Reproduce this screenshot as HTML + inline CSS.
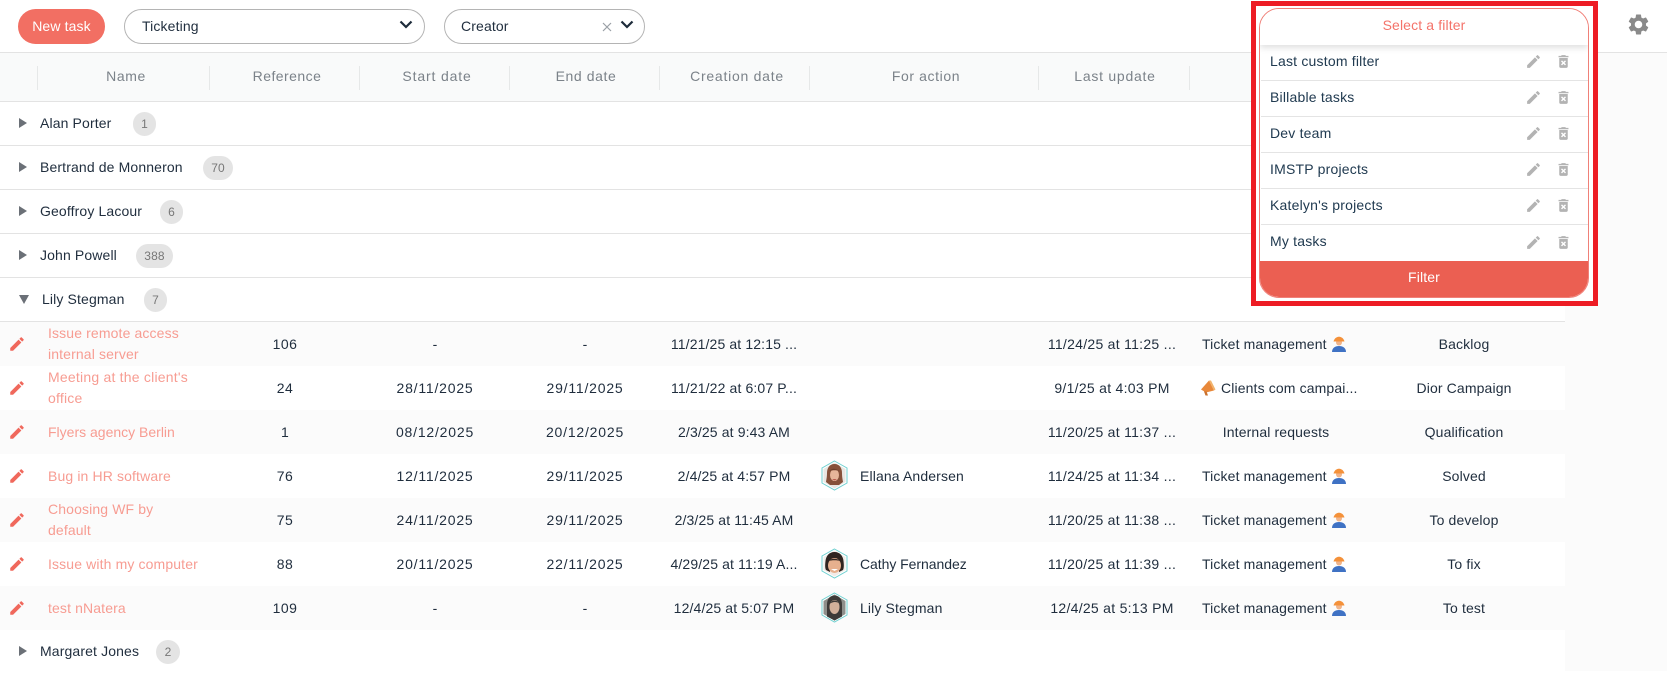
<!DOCTYPE html>
<html><head><meta charset="utf-8"><title>Tasks</title>
<style>
*{box-sizing:border-box}
html,body{margin:0;padding:0}
body{width:1667px;height:671px;overflow:hidden;background:#fff;position:relative;font-family:"Liberation Sans",sans-serif;font-size:14px;color:#1f2d3d;letter-spacing:.13px}
.a{position:absolute;white-space:nowrap}
.pill{position:absolute;top:9px;height:35px;border:1px solid #b4b4b4;border-radius:18px;background:#fff;line-height:33px}
.sep{position:absolute;top:66px;width:1px;height:24px;background:#e6e8e8}
.hd{position:absolute;top:66px;line-height:20px;color:#7b8289;letter-spacing:.6px;transform:translateX(-50%);white-space:nowrap}
.g{position:absolute;left:0;width:1565px;height:44px;background:#fff;border-bottom:1px solid #e3e3e3;line-height:43px}
.g .t{position:absolute;left:19px;top:16px;width:0;height:0;border-left:8px solid #6b7077;border-top:5px solid transparent;border-bottom:5px solid transparent}
.g .n{position:absolute;left:40px;top:0}
.g .b{position:absolute;top:10px;height:24px;border-radius:12px;background:#e4e4e4;color:#777;font-size:12px;line-height:24px;text-align:center}
.r{position:absolute;left:0;width:1565px;height:44px;line-height:44px}
.o{background:#fbfbfb}
.r svg.p{position:absolute;left:8px;top:13px;width:18px;height:18px;fill:#f0685c}
.l{position:absolute;left:48px;color:#f79c92;white-space:nowrap}
.l2{top:1px;line-height:21px}
.m{position:absolute;white-space:nowrap;transform:translateX(-50%)}
.d{letter-spacing:.8px}
.u{letter-spacing:.28px}
.em{position:absolute;top:14px;width:16px;height:16px}
.fr{position:absolute;left:1px;width:328px;border-bottom:1px solid #e4e4e4;color:#203a50;letter-spacing:.2px}
.fr span{position:absolute;left:9px;top:6px;line-height:20px;white-space:nowrap}
.fr svg{position:absolute;width:17px;height:17px;fill:#b3b3b3;top:8px}
.fr svg.e{left:264px}
.fr svg.x{left:294px}
</style></head><body>

<div class="a" style="left:1565px;top:53px;width:102px;height:618px;background:#fbfbfb"></div>

<!-- top bar -->
<div class="a" style="left:18px;top:9px;width:87px;height:35px;border-radius:18px;background:#f26f63;color:#fff;text-align:center;line-height:34px">New task</div>
<div class="pill" style="left:124px;width:301px"><span class="a" style="left:17px">Ticketing</span>
<svg class="a" style="left:274px;top:10px" width="14" height="10" viewBox="0 0 14 10"><path d="M1.500 1.500 7 7l5.500-5.500" fill="none" stroke="#1d2b3a" stroke-width="2.200"/></svg></div>
<div class="pill" style="left:444px;width:201px"><span class="a" style="left:16px">Creator</span>
<svg class="a" style="left:157px;top:12px" width="10" height="10" viewBox="0 0 10 10"><path d="M1 1l8 8M9 1l-8 8" stroke="#9aa0a6" stroke-width="1.200"/></svg>
<svg class="a" style="left:175px;top:10px" width="14" height="10" viewBox="0 0 14 10"><path d="M1.500 1.500 7 7l5.500-5.500" fill="none" stroke="#1d2b3a" stroke-width="2.200"/></svg></div>

<svg class="a" style="left:1626px;top:12px" width="25" height="25" viewBox="0 0 24 24" fill="#8a8a8a"><path d="M19.14 12.94c.04-.3.06-.61.06-.94 0-.32-.02-.64-.07-.94l2.03-1.58c.18-.14.23-.41.12-.61l-1.92-3.32c-.12-.22-.37-.29-.59-.22l-2.39.96c-.5-.38-1.03-.7-1.62-.94l-.36-2.54c-.04-.24-.24-.41-.48-.41h-3.84c-.24 0-.43.17-.47.41l-.36 2.54c-.59.24-1.13.57-1.62.94l-2.39-.96c-.22-.08-.47 0-.59.22L2.74 8.87c-.12.21-.08.47.12.61l2.03 1.58c-.05.3-.09.63-.09.94s.02.64.07.94l-2.03 1.58c-.18.14-.23.41-.12.61l1.92 3.32c.12.22.37.29.59.22l2.39-.96c.5.38 1.03.7 1.62.94l.36 2.54c.05.24.24.41.48.41h3.84c.24 0 .44-.17.47-.41l.36-2.54c.59-.24 1.13-.56 1.62-.94l2.39.96c.22.08.47 0 .59-.22l1.92-3.32c.12-.22.07-.47-.12-.61l-2.01-1.58zM12 15.6c-1.98 0-3.6-1.62-3.6-3.6s1.62-3.6 3.6-3.6 3.6 1.62 3.6 3.6-1.62 3.6-3.6 3.6z"/></svg>

<!-- table header -->
<div class="a" style="left:0;top:52px;width:1667px;height:1px;background:#e3e3e3"></div>
<div class="a" style="left:0;top:53px;width:1565px;height:49px;background:#f9fafa;border-bottom:1px solid #e3e3e3"></div>
<div class="sep" style="left:37px"></div><div class="sep" style="left:209px"></div><div class="sep" style="left:359px"></div><div class="sep" style="left:509px"></div><div class="sep" style="left:659px"></div><div class="sep" style="left:809px"></div><div class="sep" style="left:1038px"></div><div class="sep" style="left:1189px"></div>
<div class="hd" style="left:126px">Name</div>
<div class="hd" style="left:287px;letter-spacing:.45px">Reference</div>
<div class="hd" style="left:437px;letter-spacing:.85px">Start date</div>
<div class="hd" style="left:586px">End date</div>
<div class="hd" style="left:737px;letter-spacing:.75px">Creation date</div>
<div class="hd" style="left:926px">For action</div>
<div class="hd" style="left:1115px;letter-spacing:.75px">Last update</div>

<!-- groups -->
<div class="g" style="top:102px"><i class="t"></i><span class="n">Alan Porter</span><span class="b" style="left:133px;width:23px">1</span></div>
<div class="g" style="top:146px"><i class="t"></i><span class="n">Bertrand de Monneron</span><span class="b" style="left:203px;width:30px">70</span></div>
<div class="g" style="top:190px"><i class="t"></i><span class="n">Geoffroy Lacour</span><span class="b" style="left:160px;width:23px">6</span></div>
<div class="g" style="top:234px"><i class="t"></i><span class="n">John Powell</span><span class="b" style="left:136px;width:37px">388</span></div>
<div class="g" style="top:278px"><i class="t" style="top:17px;border-top:9px solid #6b7077;border-left:5px solid transparent;border-right:5px solid transparent;border-bottom:0"></i><span class="n" style="left:42px">Lily Stegman</span><span class="b" style="left:144px;width:23px">7</span></div>

<!-- rows -->
<div class="r o" style="top:322px">
<svg class="p" viewBox="0 0 24 24"><path d="M3 17.25V21h3.75L17.81 9.94l-3.75-3.75L3 17.25zM20.71 7.04c.39-.39.39-1.02 0-1.41l-2.34-2.34c-.39-.39-1.02-.39-1.41 0l-1.83 1.83 3.75 3.75 1.83-1.83z"/></svg>
<div class="l l2">Issue remote access<br>internal server</div>
<span class="m" style="left:285px;letter-spacing:.5px">106</span><span class="m" style="left:435px">-</span><span class="m" style="left:585px">-</span><span class="m" style="left:734px">11/21/25 at 12:15 ...</span><span class="m u" style="left:1112px">11/24/25 at 11:25 ...</span>
<span class="a" style="left:1202px">Ticket management</span>
<svg class="em" style="left:1331px" viewBox="0 0 16 16"><path d="M1 16c0-4 3-6 7-6s7 2 7 6z" fill="#3f72c4"/><circle cx="8" cy="6.500" r="3" fill="#f0b48a"/><path d="M2.500 5.500C3.500 2 6 .8 8 .8s4.500 1.200 5.500 4.700z" fill="#f4913a"/></svg>
<span class="m" style="left:1464px">Backlog</span></div>

<div class="r" style="top:366px">
<svg class="p" viewBox="0 0 24 24"><path d="M3 17.25V21h3.75L17.81 9.94l-3.75-3.75L3 17.25zM20.71 7.04c.39-.39.39-1.02 0-1.41l-2.34-2.34c-.39-.39-1.02-.39-1.41 0l-1.83 1.83 3.75 3.75 1.83-1.83z"/></svg>
<div class="l l2" style="letter-spacing:.22px">Meeting at the client's<br>office</div>
<span class="m" style="left:285px;letter-spacing:.5px">24</span><span class="m d" style="left:435px">28/11/2025</span><span class="m d" style="left:585px">29/11/2025</span><span class="m" style="left:734px">11/21/22 at 6:07 P...</span><span class="m u" style="left:1112px">9/1/25 at 4:03 PM</span>
<svg class="em" style="left:1200px;top:13px;height:17px" viewBox="0 0 16 16"><path d="M1 10 9 1l5 10-8 2z" fill="#e8883a"/><path d="M4 12l1.500 4h2.500l-1.500-4z" fill="#c9702c"/><path d="M9 1l5 10 1.500-1L11 1z" fill="#f2b36b"/></svg>
<span class="a" style="left:1221px">Clients com campai...</span>
<span class="m" style="left:1464px">Dior Campaign</span></div>

<div class="r o" style="top:410px">
<svg class="p" viewBox="0 0 24 24"><path d="M3 17.25V21h3.75L17.81 9.94l-3.75-3.75L3 17.25zM20.71 7.04c.39-.39.39-1.02 0-1.41l-2.34-2.34c-.39-.39-1.02-.39-1.41 0l-1.83 1.83 3.75 3.75 1.83-1.83z"/></svg>
<div class="l" style="letter-spacing:0">Flyers agency Berlin</div>
<span class="m" style="left:285px">1</span><span class="m d" style="left:435px">08/12/2025</span><span class="m d" style="left:585px">20/12/2025</span><span class="m" style="left:734px">2/3/25 at 9:43 AM</span><span class="m u" style="left:1112px">11/20/25 at 11:37 ...</span>
<span class="m" style="left:1276px">Internal requests</span>
<span class="m" style="left:1464px">Qualification</span></div>

<div class="r" style="top:454px">
<svg class="p" viewBox="0 0 24 24"><path d="M3 17.25V21h3.75L17.81 9.94l-3.75-3.75L3 17.25zM20.71 7.04c.39-.39.39-1.02 0-1.41l-2.34-2.34c-.39-.39-1.02-.39-1.41 0l-1.83 1.83 3.75 3.75 1.83-1.83z"/></svg>
<div class="l">Bug in HR software</div>
<span class="m" style="left:285px;letter-spacing:.5px">76</span><span class="m d" style="left:435px">12/11/2025</span><span class="m d" style="left:585px">29/11/2025</span><span class="m" style="left:734px">2/4/25 at 4:57 PM</span>
<svg class="a" style="left:821px;top:6px" width="27" height="31" viewBox="0 0 27 31"><polygon points="13.500,1 26,8 26,23 13.500,30 1,23 1,8" fill="#fff" stroke="#6fd0d0"/><polygon points="13.500,2.500 24.500,9 24.500,22 13.500,28.500 2.500,22 2.500,9" fill="#e9e6e2"/><path d="M13.500 4c-5 0-7.500 4-7.500 9 0 5-1 8-1 9l4 3h9l4-3c0-1-1-4-1-9 0-5-2.500-9-7.500-9z" fill="#86513a"/><ellipse cx="13.500" cy="15" rx="4.500" ry="6" fill="#e6b59a"/><path d="M8.500 11c2-3 6-3 10 0-3-1-7-1-10 0z" fill="#6e3f2c"/><path d="M11 19h5l-2.500 1.500z" fill="#b8584d"/></svg>
<span class="a" style="left:860px">Ellana Andersen</span>
<span class="m u" style="left:1112px">11/24/25 at 11:34 ...</span>
<span class="a" style="left:1202px">Ticket management</span>
<svg class="em" style="left:1331px" viewBox="0 0 16 16"><path d="M1 16c0-4 3-6 7-6s7 2 7 6z" fill="#3f72c4"/><circle cx="8" cy="6.500" r="3" fill="#f0b48a"/><path d="M2.500 5.500C3.500 2 6 .8 8 .8s4.500 1.200 5.500 4.700z" fill="#f4913a"/></svg>
<span class="m" style="left:1464px">Solved</span></div>

<div class="r o" style="top:498px">
<svg class="p" viewBox="0 0 24 24"><path d="M3 17.25V21h3.75L17.81 9.94l-3.75-3.75L3 17.25zM20.71 7.04c.39-.39.39-1.02 0-1.41l-2.34-2.34c-.39-.39-1.02-.39-1.41 0l-1.83 1.83 3.75 3.75 1.83-1.83z"/></svg>
<div class="l l2">Choosing WF by<br>default</div>
<span class="m" style="left:285px;letter-spacing:.5px">75</span><span class="m d" style="left:435px">24/11/2025</span><span class="m d" style="left:585px">29/11/2025</span><span class="m" style="left:734px">2/3/25 at 11:45 AM</span><span class="m u" style="left:1112px">11/20/25 at 11:38 ...</span>
<span class="a" style="left:1202px">Ticket management</span>
<svg class="em" style="left:1331px" viewBox="0 0 16 16"><path d="M1 16c0-4 3-6 7-6s7 2 7 6z" fill="#3f72c4"/><circle cx="8" cy="6.500" r="3" fill="#f0b48a"/><path d="M2.500 5.500C3.500 2 6 .8 8 .8s4.500 1.200 5.500 4.700z" fill="#f4913a"/></svg>
<span class="m" style="left:1464px">To develop</span></div>

<div class="r" style="top:542px">
<svg class="p" viewBox="0 0 24 24"><path d="M3 17.25V21h3.75L17.81 9.94l-3.75-3.75L3 17.25zM20.71 7.04c.39-.39.39-1.02 0-1.41l-2.34-2.34c-.39-.39-1.02-.39-1.41 0l-1.83 1.83 3.75 3.75 1.83-1.83z"/></svg>
<div class="l">Issue with my computer</div>
<span class="m" style="left:285px;letter-spacing:.5px">88</span><span class="m d" style="left:435px">20/11/2025</span><span class="m d" style="left:585px">22/11/2025</span><span class="m" style="left:734px">4/29/25 at 11:19 A...</span>
<svg class="a" style="left:821px;top:6px" width="27" height="31" viewBox="0 0 27 31"><polygon points="13.500,1 26,8 26,23 13.500,30 1,23 1,8" fill="#fff" stroke="#6fd0d0"/><polygon points="13.500,2.500 24.500,9 24.500,22 13.500,28.500 2.500,22 2.500,9" fill="#f1ece8"/><path d="M13.500 4C8 4 5 8 4.500 13 4 17 4 20 5 22l4 2V14c3 0 7 0 9 0v10l4-2c1-2 1-5 .5-9C22 8 19 4 13.500 4z" fill="#2f2420"/><ellipse cx="13.500" cy="17.500" rx="6.500" ry="7.500" fill="#e6b08e"/><path d="M7 13c3-3 9-3 13 0-4-1-9-1-13 0z" fill="#2f2420"/><path d="M10 21h7l-3.500 2z" fill="#fff"/></svg>
<span class="a" style="left:860px;letter-spacing:-.05px">Cathy Fernandez</span>
<span class="m u" style="left:1112px">11/20/25 at 11:39 ...</span>
<span class="a" style="left:1202px">Ticket management</span>
<svg class="em" style="left:1331px" viewBox="0 0 16 16"><path d="M1 16c0-4 3-6 7-6s7 2 7 6z" fill="#3f72c4"/><circle cx="8" cy="6.500" r="3" fill="#f0b48a"/><path d="M2.500 5.500C3.500 2 6 .8 8 .8s4.500 1.200 5.500 4.700z" fill="#f4913a"/></svg>
<span class="m" style="left:1464px">To fix</span></div>

<div class="r o" style="top:586px">
<svg class="p" viewBox="0 0 24 24"><path d="M3 17.25V21h3.75L17.81 9.94l-3.75-3.75L3 17.25zM20.71 7.04c.39-.39.39-1.02 0-1.41l-2.34-2.34c-.39-.39-1.02-.39-1.41 0l-1.83 1.83 3.75 3.75 1.83-1.83z"/></svg>
<div class="l">test nNatera</div>
<span class="m" style="left:285px;letter-spacing:.5px">109</span><span class="m" style="left:435px">-</span><span class="m" style="left:585px">-</span><span class="m" style="left:734px">12/4/25 at 5:07 PM</span>
<svg class="a" style="left:821px;top:6px" width="27" height="31" viewBox="0 0 27 31"><polygon points="13.500,1 26,8 26,23 13.500,30 1,23 1,8" fill="#fff" stroke="#6fd0d0"/><polygon points="13.500,2.500 24.500,9 24.500,22 13.500,28.500 2.500,22 2.500,9" fill="#8f8f8b"/><path d="M13.500 3.500c-5 0-7.500 4-7.500 9v12l7.500 4 7.500-4v-12c0-5-2.500-9-7.500-9z" fill="#3d3a38"/><ellipse cx="13.500" cy="15" rx="5" ry="7" fill="#d2b09a"/><path d="M8.500 12c2-4 6-5 10-1-3-1-6-2-10 1z" fill="#3d3a38"/></svg>
<span class="a" style="left:860px">Lily Stegman</span>
<span class="m u" style="left:1112px">12/4/25 at 5:13 PM</span>
<span class="a" style="left:1202px">Ticket management</span>
<svg class="em" style="left:1331px" viewBox="0 0 16 16"><path d="M1 16c0-4 3-6 7-6s7 2 7 6z" fill="#3f72c4"/><circle cx="8" cy="6.500" r="3" fill="#f0b48a"/><path d="M2.500 5.500C3.500 2 6 .8 8 .8s4.500 1.200 5.500 4.700z" fill="#f4913a"/></svg>
<span class="m" style="left:1464px">To test</span></div>

<div class="g" style="top:630px;border-bottom:0"><i class="t"></i><span class="n">Margaret Jones</span><span class="b" style="left:156px;width:24px">2</span></div>

<!-- highlight + filter panel -->
<div class="a" style="left:1251px;top:1px;width:347px;height:305px;border:5px solid #ed1c24;background:#fff"></div>
<div class="a" style="left:1259px;top:8px;width:330px;height:290px;background:#fff;border:1px solid #f08078;border-radius:20px;overflow:hidden">
  <div class="a" style="left:0;top:0;width:328px;height:36px;text-align:center;line-height:32px;color:#f4736a;box-shadow:0 3px 6px rgba(0,0,0,.12);background:#fff;z-index:2">Select a filter</div>
  <div class="fr" style="top:36px;height:36px"><span>Last custom filter</span><svg class="e" viewBox="0 0 24 24"><path d="M3 17.25V21h3.75L17.81 9.94l-3.75-3.75L3 17.25zM20.71 7.04c.39-.39.39-1.02 0-1.41l-2.34-2.34c-.39-.39-1.02-.39-1.41 0l-1.83 1.83 3.75 3.75 1.83-1.83z"/></svg><svg class="x" viewBox="0 0 24 24"><path d="M6 19c0 1.1.9 2 2 2h8c1.1 0 2-.9 2-2V7H6v12zm2.460-7.120l1.410-1.410L12 12.590l2.120-2.120 1.410 1.410L13.410 14l2.120 2.120-1.410 1.410L12 15.410l-2.120 2.120-1.410-1.410L10.590 14l-2.130-2.120zM15.500 4l-1-1h-5l-1 1H5v2h14V4z"/></svg></div>
  <div class="fr" style="top:72px;height:36px"><span>Billable tasks</span><svg class="e" viewBox="0 0 24 24"><path d="M3 17.25V21h3.75L17.81 9.94l-3.75-3.75L3 17.25zM20.71 7.04c.39-.39.39-1.02 0-1.41l-2.34-2.34c-.39-.39-1.02-.39-1.41 0l-1.83 1.83 3.75 3.75 1.83-1.83z"/></svg><svg class="x" viewBox="0 0 24 24"><path d="M6 19c0 1.1.9 2 2 2h8c1.1 0 2-.9 2-2V7H6v12zm2.460-7.120l1.410-1.410L12 12.590l2.120-2.120 1.410 1.410L13.410 14l2.120 2.120-1.410 1.410L12 15.410l-2.120 2.120-1.410-1.410L10.590 14l-2.130-2.120zM15.500 4l-1-1h-5l-1 1H5v2h14V4z"/></svg></div>
  <div class="fr" style="top:108px;height:36px"><span>Dev team</span><svg class="e" viewBox="0 0 24 24"><path d="M3 17.25V21h3.75L17.81 9.94l-3.75-3.75L3 17.25zM20.71 7.04c.39-.39.39-1.02 0-1.41l-2.34-2.34c-.39-.39-1.02-.39-1.41 0l-1.83 1.83 3.75 3.75 1.83-1.83z"/></svg><svg class="x" viewBox="0 0 24 24"><path d="M6 19c0 1.1.9 2 2 2h8c1.1 0 2-.9 2-2V7H6v12zm2.460-7.120l1.410-1.410L12 12.590l2.120-2.120 1.410 1.410L13.410 14l2.120 2.120-1.410 1.410L12 15.410l-2.120 2.120-1.410-1.410L10.590 14l-2.130-2.120zM15.500 4l-1-1h-5l-1 1H5v2h14V4z"/></svg></div>
  <div class="fr" style="top:144px;height:36px"><span>IMSTP projects</span><svg class="e" viewBox="0 0 24 24"><path d="M3 17.25V21h3.75L17.81 9.94l-3.75-3.75L3 17.25zM20.71 7.04c.39-.39.39-1.02 0-1.41l-2.34-2.34c-.39-.39-1.02-.39-1.41 0l-1.83 1.83 3.75 3.75 1.83-1.83z"/></svg><svg class="x" viewBox="0 0 24 24"><path d="M6 19c0 1.1.9 2 2 2h8c1.1 0 2-.9 2-2V7H6v12zm2.460-7.120l1.410-1.410L12 12.590l2.120-2.120 1.410 1.410L13.410 14l2.120 2.120-1.410 1.410L12 15.410l-2.120 2.120-1.410-1.410L10.590 14l-2.130-2.120zM15.500 4l-1-1h-5l-1 1H5v2h14V4z"/></svg></div>
  <div class="fr" style="top:180px;height:36px"><span>Katelyn's projects</span><svg class="e" viewBox="0 0 24 24"><path d="M3 17.25V21h3.75L17.81 9.94l-3.75-3.75L3 17.25zM20.71 7.04c.39-.39.39-1.02 0-1.41l-2.34-2.34c-.39-.39-1.02-.39-1.41 0l-1.83 1.83 3.75 3.75 1.83-1.83z"/></svg><svg class="x" viewBox="0 0 24 24"><path d="M6 19c0 1.1.9 2 2 2h8c1.1 0 2-.9 2-2V7H6v12zm2.460-7.120l1.410-1.410L12 12.590l2.120-2.120 1.410 1.410L13.410 14l2.120 2.120-1.410 1.410L12 15.410l-2.120 2.120-1.410-1.410L10.590 14l-2.130-2.120zM15.500 4l-1-1h-5l-1 1H5v2h14V4z"/></svg></div>
  <div class="fr" style="top:216px;height:36px;border-bottom:0"><span>My tasks</span><svg class="e" style="top:9px" viewBox="0 0 24 24"><path d="M3 17.25V21h3.75L17.81 9.94l-3.75-3.75L3 17.25zM20.71 7.04c.39-.39.39-1.02 0-1.41l-2.34-2.34c-.39-.39-1.02-.39-1.41 0l-1.83 1.83 3.75 3.75 1.83-1.83z"/></svg><svg class="x" style="top:9px" viewBox="0 0 24 24"><path d="M6 19c0 1.1.9 2 2 2h8c1.1 0 2-.9 2-2V7H6v12zm2.460-7.120l1.410-1.410L12 12.590l2.120-2.120 1.410 1.410L13.410 14l2.120 2.120-1.410 1.410L12 15.410l-2.120 2.120-1.410-1.410L10.590 14l-2.130-2.120zM15.500 4l-1-1h-5l-1 1H5v2h14V4z"/></svg></div>
  <div class="a" style="left:0;top:252px;width:328px;height:37px;background:#eb5f52;color:#fff;text-align:center;line-height:32px">Filter</div>
</div>
</body></html>
